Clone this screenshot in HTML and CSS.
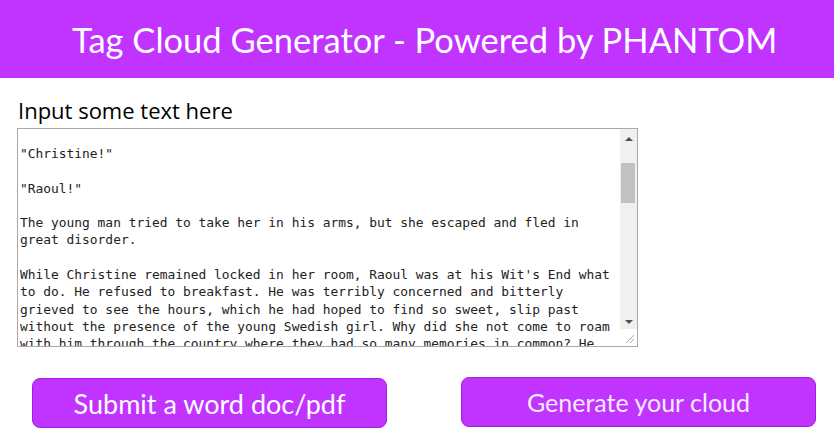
FILE: index.html
```html
<!DOCTYPE html>
<html lang="en">
<head>
<meta charset="utf-8">
<title>Tag Cloud Generator</title>
<link rel="stylesheet" href="styles.css">
</head>
<body>
<header class="topbar">
  <h1 class="title">Tag Cloud Generator - Powered by PHANTOM</h1>
</header>
<main class="content">
  <label class="prompt" for="src">Input some text here</label>
  <div class="textbox" id="src">
    <pre class="text">"Christine!"

"Raoul!"

The young man tried to take her in his arms, but she escaped and fled in
great disorder.

While Christine remained locked in her room, Raoul was at his Wit's End what
to do. He refused to breakfast. He was terribly concerned and bitterly
grieved to see the hours, which he had hoped to find so sweet, slip past
without the presence of the young Swedish girl. Why did she not come to roam
with him through the country where they had so many memories in common? He</pre>
    <div class="side">
      <div class="scrollbar">
        <span class="btn"><span class="arrow up"></span></span>
        <div class="track"><div class="thumb"></div></div>
        <span class="btn"><span class="arrow down"></span></span>
      </div>
      <div class="corner">
        <svg width="11" height="11" viewBox="0 0 11 11"><path d="M10 2 L2 10 M10 6 L6 10" stroke="#a8a8a8" stroke-width="1" fill="none"/></svg>
      </div>
    </div>
  </div>
</main>
<div class="actions">
  <button class="action">Submit a word doc/pdf</button>
  <button class="action alt">Generate your cloud</button>
</div>
</body>
</html>
```
FILE: styles.css
```css
* { box-sizing: border-box; }
html, body { margin: 0; padding: 0; background: #fff; }
body { font-family: Lato, "Open Sans", sans-serif; width: 834px; height: 441px; overflow: hidden; }

.topbar {
  height: 78px;
  background: #c133ff;
  display: flex;
  align-items: center;
  padding-left: 72px;
}
.title {
  margin: 0;
  color: #fff;
  font-family: Lato, sans-serif;
  font-weight: 400;
  font-size: 34.5px;
  line-height: 1;
  padding-top: 2px;
  white-space: nowrap;
}

.content {
  padding: 17px 0 0 17px;
  display: flex;
  flex-direction: column;
}
.prompt {
  font-family: "Open Sans", sans-serif;
  font-size: 22px;
  line-height: 30px;
  color: #000;
  padding-left: 1px;
  margin-bottom: 3px;
}
.textbox {
  width: 621px;
  height: 219px;
  border: 1px solid #a9a9a9;
  display: flex;
  overflow: hidden;
  background: #fff;
}
.text {
  flex: 1;
  margin: 0;
  padding: 16px 0 0 2px;
  font-family: "DejaVu Sans Mono", monospace;
  font-size: 12.9px;
  line-height: 17.3px;
  color: #222;
  white-space: pre;
  overflow: hidden;
}
.side {
  width: 17px;
  display: flex;
  flex-direction: column;
}
.scrollbar {
  height: 200px;
  background: #f0f0f0;
  display: flex;
  flex-direction: column;
}
.btn {
  height: 17px;
  display: flex;
  align-items: center;
  justify-content: center;
}
.arrow { width: 0; height: 0; border-left: 4px solid transparent; border-right: 4px solid transparent; }
.arrow.up { border-bottom: 4px solid #505050; margin-top: 3px; }
.arrow.down { border-top: 4px solid #505050; margin-bottom: -3px; }
.track { flex: 1; padding: 17px 2px 0 1px; }
.thumb { height: 40px; background: #c1c1c1; }
.corner {
  flex: 1;
  background: #fff;
  display: flex;
  align-items: flex-end;
  justify-content: flex-end;
  padding: 0 2px 2px 0;
}

.actions {
  display: flex;
  gap: 74px;
  padding: 31px 0 0 32px;
  align-items: flex-start;
}
.action {
  width: 355px;
  height: 50px;
  background: #c133ff;
  border: 1px solid #a01fe0;
  border-radius: 8px;
  color: #fff;
  font-family: Lato, sans-serif;
  font-size: 27px;
  padding: 0;
  cursor: pointer;
}
.action.alt { margin-top: -1px; color: #f7ecff; font-size: 25px; }
```
